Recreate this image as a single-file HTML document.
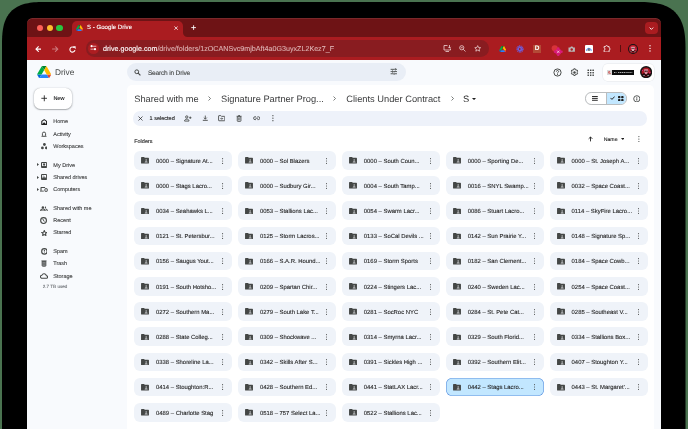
<!DOCTYPE html>
<html><head><meta charset="utf-8">
<style>
*{box-sizing:border-box;margin:0;padding:0}
html,body{width:688px;height:429px;overflow:hidden}
body{background:#4a7350;font-family:"Liberation Sans",sans-serif;position:relative;text-rendering:geometricPrecision}
.abs{position:absolute}
.t{position:absolute;line-height:1;white-space:nowrap}

#win{will-change:transform;position:absolute;left:27px;top:18px;width:634px;height:430px}
#tabs{position:absolute;left:0;top:0;width:634px;height:19.2px;background:#6e1315;border-radius:5.5px 5.5px 0 0;box-shadow:inset 0 0.8px 0 rgba(255,255,255,0.12)}
#toolbar{position:absolute;left:0;top:20px;width:634px;height:21.8px;background:#aa1c20}
.tl{position:absolute;top:6.8px;width:6.6px;height:6.6px;border-radius:50%}
#tab{position:absolute;left:45px;top:3px;width:111px;height:17.2px;background:#aa1c20;border-radius:5px 5px 0 0}
#url{position:absolute;left:58.5px;top:2.4px;width:403.7px;height:16.5px;background:#891c20;border-radius:8.25px}
.tile{position:absolute;width:98px;height:18.6px;background:#eff3f9;border-radius:6px}
.tile .fi{position:absolute;left:7.2px;top:6.2px;width:8px;height:6.6px}
.tile .tx{position:absolute;left:22px;top:1.5px;line-height:18.6px;font-size:5.9px;color:#1f1f1f;white-space:nowrap;letter-spacing:0;-webkit-text-stroke:0.1px #1f1f1f}
.tile .kb{position:absolute;left:88.4px;top:6.6px;width:1.2px;height:6px}
.tile.sel{background:#c2e7ff;box-shadow:inset 0 0 0 0.6px #5f94e0}
.nav{position:absolute;left:26.3px;font-size:5.5px;color:#38393a;-webkit-text-stroke:0.1px #38393a}
.ic{position:absolute}
</style></head>
<body>
<svg id="frame" class="abs" style="left:0;top:0" width="688" height="429" viewBox="0 0 688 429"><path d="M2.0,440.0 L2.00,47.00 L2.02,41.80 L2.09,38.75 L2.21,36.20 L2.37,33.94 L2.58,31.86 L2.83,29.94 L3.13,28.13 L3.48,26.43 L3.87,24.82 L4.31,23.28 L4.80,21.82 L5.33,20.42 L5.91,19.08 L6.54,17.81 L7.21,16.59 L7.93,15.42 L8.70,14.31 L9.51,13.25 L10.37,12.24 L11.28,11.28 L12.24,10.37 L13.25,9.51 L14.31,8.70 L15.42,7.93 L16.59,7.21 L17.81,6.54 L19.08,5.91 L20.42,5.33 L21.82,4.80 L23.28,4.31 L24.82,3.87 L26.43,3.48 L28.13,3.13 L29.94,2.83 L31.86,2.58 L33.94,2.37 L36.20,2.21 L38.75,2.09 L41.80,2.02 L47.00,2.00 L635.50,2.00 L641.28,2.03 L644.66,2.10 L647.50,2.23 L650.02,2.41 L652.32,2.64 L654.46,2.93 L656.46,3.26 L658.35,3.65 L660.15,4.08 L661.86,4.57 L663.48,5.11 L665.03,5.70 L666.52,6.35 L667.94,7.04 L669.29,7.79 L670.58,8.59 L671.82,9.44 L673.00,10.35 L674.12,11.30 L675.19,12.31 L676.20,13.38 L677.15,14.50 L678.06,15.68 L678.91,16.92 L679.71,18.21 L680.46,19.56 L681.15,20.98 L681.80,22.47 L682.39,24.02 L682.93,25.64 L683.42,27.35 L683.85,29.15 L684.24,31.04 L684.57,33.04 L684.86,35.18 L685.09,37.48 L685.27,40.00 L685.40,42.84 L685.47,46.22 L685.50,52.00 L685.5,440.0 Z" fill="#000"/></svg>
<div id="win">
  <div class="abs" style="left:0;top:30px;width:634px;height:400px;background:#f8fafd"></div>
  <div id="tabs">
    <div class="tl" style="left:9.7px;background:#fe5f57"></div>
    <div class="tl" style="left:19.6px;background:#febc2e"></div>
    <div class="tl" style="left:29.2px;background:#28c840"></div>
    <div class="abs" style="left:40px;top:15px;width:5px;height:5px;background:#aa1c20"></div>
    <div class="abs" style="left:40px;top:10px;width:5px;height:9.2px;background:#6e1315;border-radius:0 0 4.5px 0"></div>
    <div class="abs" style="left:156px;top:15px;width:5px;height:5px;background:#aa1c20"></div>
    <div class="abs" style="left:156px;top:10px;width:5px;height:9.2px;background:#6e1315;border-radius:0 0 0 4.5px"></div>
    <div id="tab">
      <svg class="abs" style="left:3.8px;top:3.8px" width="7.1" height="6.4" viewBox="0 0 87.3 78"><path d="m6.6 66.85 3.850 6.65c.8 1.4 1.95 2.5 3.3 3.3l13.75-23.8h-27.5c0 1.55.4 3.1 1.2 4.5z" fill="#0066da"/><path d="m43.65 25-13.75-23.8c-1.35.8-2.5 1.9-3.3 3.3l-25.4 44a9.06 9.06 0 0 0 -1.2 4.5h27.5z" fill="#00ac47"/><path d="m73.55 76.8c1.35-.8 2.5-1.9 3.3-3.3l1.6-2.75 7.65-13.250c.8-1.4 1.2-2.95 1.2-4.5h-27.502l5.852 11.5z" fill="#ea4335"/><path d="m43.65 25 13.75-23.8c-1.35-.8-2.9-1.2-4.5-1.2h-18.5c-1.6 0-3.15.45-4.5 1.2z" fill="#00832d"/><path d="m59.8 53h-32.3l-13.75 23.8c1.35.8 2.9 1.2 4.5 1.2h50.8c1.6 0 3.15-.45 4.5-1.2z" fill="#2684fc"/><path d="m73.4 26.5-12.7-22c-.8-1.4-1.95-2.5-3.3-3.3l-13.75 23.8 16.15 28h27.45c0-1.55-.4-3.1-1.2-4.5z" fill="#ffba00"/></svg>
      <div class="abs" style="left:15px;top:-0.6px;line-height:16px;font-size:6.1px;color:#fff;-webkit-text-stroke:0.1px #fff">S - Google Drive</div>
      <svg class="abs" style="left:101.9px;top:4.7px" width="4.2" height="4.2" viewBox="0 0 10 10"><path d="M1 1l8 8M9 1L1 9" stroke="#fff" stroke-width="1.8"/></svg>
    </div>
    <svg class="abs" style="left:163.8px;top:7.2px" width="5.2" height="5.2" viewBox="0 0 10 10"><path d="M5 0.5v9M0.5 5h9" stroke="#fff" stroke-width="1.7"/></svg>
    <div class="abs" style="left:618px;top:3.6px;width:12.7px;height:12.7px;border-radius:4px;background:#aa1c20"><svg class="abs" style="left:4px;top:5px" width="4.8" height="3" viewBox="0 0 8 5"><path d="M1 1l3 3 3-3" fill="none" stroke="#fff" stroke-width="1.5"/></svg></div>
  </div>
  <div class="abs" style="left:0;top:19.2px;width:634px;height:1px;background:#aa1c20"></div>
  <div id="toolbar">
    <svg class="abs" style="left:7.6px;top:7.9px" width="6.8" height="6.2" viewBox="0 0 12 11"><path d="M11.2 5.5H1.8M6 1.3L1.6 5.5 6 9.7" fill="none" stroke="#fff" stroke-width="1.9" stroke-linejoin="round" stroke-linecap="round"/></svg>
    <svg class="abs" style="left:24.9px;top:7.9px" width="6.8" height="6.2" viewBox="0 0 12 11"><path d="M0.8 5.5h9.4M6 1.3l4.4 4.2L6 9.7" fill="none" stroke="#fff" stroke-opacity="0.42" stroke-width="1.8" stroke-linejoin="round" stroke-linecap="round"/></svg>
    <svg class="abs" style="left:42.1px;top:7.6px" width="7" height="7" viewBox="0 0 12 12"><path d="M10.2 7.2A4.4 4.4 0 1 1 8.6 2.6" fill="none" stroke="#fff" stroke-width="1.9"/><path d="M6.6 0.6h4.8v4.8z" fill="#fff"/></svg>
    <div id="url">
      <div class="abs" style="left:2.55px;top:2.55px;width:10.7px;height:10.7px;border-radius:50%;background:#ad1d21"></div>
      <svg class="abs" style="left:4.6px;top:5.0px" width="6.8" height="5.4" viewBox="0 0 14 11"><path d="M5.5 2.5H13M1 8.5h7" stroke="#fff" stroke-opacity="0.9" stroke-width="1.5"/><circle cx="3.3" cy="2.5" r="2.3" fill="#fff"/><circle cx="10.3" cy="8.5" r="2.3" fill="#fff"/></svg>
      <svg class="abs" style="left:357.6px;top:4.3px" width="8.5" height="7" viewBox="0 0 17 14"><path d="M9 1H2v9h13V7" fill="none" stroke="#f3dede" stroke-width="1.5"/><path d="M5 13h7" stroke="#f3dede" stroke-width="1.5"/><path d="M13 0v6M10.5 3.8L13 6.3l2.5-2.5" fill="none" stroke="#f3dede" stroke-width="1.5"/></svg>
      <svg class="abs" style="left:373.6px;top:4.4px" width="7" height="7" viewBox="0 0 14 14"><circle cx="5.5" cy="5.5" r="4.2" fill="none" stroke="#f3dede" stroke-width="1.5"/><path d="M8.5 8.5l4.5 4.5M3.5 5.5h4" stroke="#f3dede" stroke-width="1.5"/></svg>
      <svg class="abs" style="left:388.9px;top:4.3px" width="7.4" height="7.2" viewBox="0 0 14 14"><path d="M7 1.2l1.7 3.7 4 .4-3 2.7.9 4L7 10l-3.6 2 .9-4-3-2.7 4-.4z" fill="none" stroke="#f3dede" stroke-width="1.4" stroke-linejoin="round"/></svg>
      <div class="abs" style="left:17.5px;top:0.3px;line-height:16.2px;font-size:7.15px;color:#fff;white-space:nowrap;-webkit-text-stroke:0.12px #fff">drive.google.com<span style="color:#dcb0b0;-webkit-text-stroke:0.12px #dcb0b0">/drive/folders/1zOCANSvc9mjbAft4a0G3uyxZL2Kez7_F</span></div>
    </div>
    <svg class="abs" style="left:471.6px;top:7.6px" width="7.6" height="6.4" viewBox="0 0 87.3 78"><path d="m6.6 66.85 3.85 6.65c.8 1.4 1.95 2.5 3.3 3.3l13.75-23.8h-27.5c0 1.55.4 3.1 1.2 4.5z" fill="#0066da"/><path d="m43.65 25-13.75-23.8c-1.35.8-2.5 1.9-3.3 3.3l-25.4 44a9.06 9.06 0 0 0 -1.2 4.5h27.5z" fill="#00ac47"/><path d="m73.55 76.8c1.35-.8 2.5-1.9 3.3-3.3l1.6-2.75 7.65-13.25c.8-1.4 1.2-2.95 1.2-4.5h-27.502l5.852 11.5z" fill="#ea4335"/><path d="m43.65 25 13.75-23.8c-1.35-.8-2.9-1.2-4.5-1.2h-18.5c-1.6 0-3.15.45-4.5 1.2z" fill="#00832d"/><path d="m59.8 53h-32.3l-13.75 23.8c1.35.8 2.9 1.2 4.5 1.2h50.8c1.6 0 3.15-.45 4.5-1.2z" fill="#2684fc"/><path d="m73.4 26.5-12.7-22c-.8-1.4-1.95-2.5-3.3-3.3l-13.75 23.8 16.15 28h27.45c0-1.55-.4-3.1-1.2-4.5z" fill="#ffba00"/></svg>
    <svg class="abs" style="left:489px;top:6.9px" width="8" height="8" viewBox="0 0 16 16"><circle cx="8" cy="8" r="5.8" fill="none" stroke="#6d5ee0" stroke-width="3" stroke-dasharray="2 1.1"/><circle cx="8" cy="8" r="4.5" fill="#6d5ee0"/><path d="M6 5.5l4.5 2.5L6 10.5z" fill="#aa1c20"/></svg>
    <div class="abs" style="left:506.2px;top:7px;width:7.8px;height:7.8px;background:#b34a36"><div class="t" style="left:1.6px;top:1.1px;font-size:6.5px;color:#fff;font-weight:bold">D</div></div>
    <svg class="abs" style="left:523.5px;top:6.2px" width="12" height="12" viewBox="0 0 24 24"><circle cx="7.5" cy="8.5" r="6.2" fill="#d8333a"/><g fill="#d81b78"><circle cx="14.5" cy="15.5" r="6.2"/><circle cx="14.5" cy="9" r="2.6"/><circle cx="21" cy="15.5" r="2.6"/><circle cx="14.5" cy="22" r="2.4"/><circle cx="8" cy="15.5" r="2.6"/></g><path d="M12.3 13.3l4.4 4.4M16.7 13.3l-4.4 4.4" stroke="#f4d8e4" stroke-width="1.5"/></svg>
    <svg class="abs" style="left:541.2px;top:7.9px" width="7.4" height="6" viewBox="0 0 15 12"><path d="M1 3h3.5l1.5-2h3l1.5 2H14v8.5H1z" fill="#b9b9b9"/><circle cx="7.5" cy="7" r="2.4" fill="#aa1c20"/></svg>
    <div class="abs" style="left:558.2px;top:6.9px;width:8.2px;height:7.7px;background:#fff;border-radius:1px"><svg class="abs" style="left:1.2px;top:1.2px" width="5.8" height="5.3" viewBox="0 0 12 11"><path d="M1 10a5 5 0 0 1 10 0" fill="none" stroke="#4285f4" stroke-width="2"/><path d="M6 3l3 7H3z" fill="#5f6368"/></svg></div>
    <svg class="abs" style="left:576px;top:6.9px" width="8.2" height="7.5" viewBox="0 0 16 15"><path d="M2 3h3a2 2 0 0 1 4 0h3v3a2 2 0 0 1 0 4v4H2v-4a2 2 0 0 0 0-4z" fill="none" stroke="#fff" stroke-width="1.5" stroke-linejoin="round"/></svg>
    <div class="abs" style="left:592.6px;top:7.2px;width:0.8px;height:6.7px;background:#5a0e0e"></div>
    <svg class="abs" style="left:600.9px;top:6px" width="10" height="10" viewBox="0 0 24 24"><circle cx="12" cy="12" r="12" fill="#151515"/><circle cx="12" cy="12" r="9.6" fill="#c01a28"/><path d="M8 6.5h8l1 5-2 2.5v3h-6v-3l-2-2.5z" fill="#e6a8b4"/><circle cx="9.8" cy="10.5" r="1.5" fill="#3a0a10"/><circle cx="14.2" cy="10.5" r="1.5" fill="#3a0a10"/><path d="M5 17l3-2 4 3 4-3 3 2-3 3h-8z" fill="#2a0a0e"/><path d="M6 18.5h3M15 18.5h3" stroke="#f0d0d8" stroke-width="1.5"/><circle cx="19" cy="13" r="1.3" fill="#e0309a"/><circle cx="5.5" cy="9" r="1" fill="#e0309a"/></svg>
    <svg class="abs" style="left:622px;top:7.2px" width="2" height="6.8" viewBox="0 0 2 10"><circle cx="1" cy="1.1" r="1" fill="#fff"/><circle cx="1" cy="5" r="1" fill="#fff"/><circle cx="1" cy="8.9" r="1" fill="#fff"/></svg>
  </div>

  <!-- Drive header -->
  <svg class="abs" style="left:9.9px;top:48px" width="14.3" height="12.4" viewBox="0 0 87.3 78"><path d="m6.6 66.85 3.85 6.65c.8 1.4 1.95 2.5 3.3 3.3l13.75-23.8h-27.5c0 1.55.4 3.1 1.2 4.5z" fill="#0066da"/><path d="m43.65 25-13.75-23.8c-1.35.8-2.5 1.9-3.3 3.3l-25.4 44a9.06 9.06 0 0 0 -1.2 4.5h27.5z" fill="#00ac47"/><path d="m73.55 76.8c1.35-.8 2.5-1.9 3.3-3.3l1.6-2.75 7.65-13.25c.8-1.4 1.2-2.95 1.2-4.5h-27.502l5.852 11.5z" fill="#ea4335"/><path d="m43.65 25 13.75-23.8c-1.35-.8-2.9-1.2-4.5-1.2h-18.5c-1.6 0-3.15.45-4.5 1.2z" fill="#00832d"/><path d="m59.8 53h-32.3l-13.75 23.8c1.35.8 2.9 1.2 4.5 1.2h50.8c1.6 0 3.15-.45 4.5-1.2z" fill="#2684fc"/><path d="m73.4 26.5-12.7-22c-.8-1.4-1.95-2.5-3.3-3.3l-13.75 23.8 16.15 28h27.45c0-1.55-.4-3.1-1.2-4.5z" fill="#ffba00"/></svg>
  <div class="t" style="left:28px;top:50.2px;font-size:8.3px;color:#444746">Drive</div>
  <div class="abs" style="left:6.7px;top:69.9px;width:38.5px;height:21.2px;background:#fff;border-radius:6.5px;box-shadow:0 0.4px 1px rgba(60,64,67,.3),0 0.4px 1.5px 0.4px rgba(60,64,67,.15)"></div>
  <svg class="abs" style="left:13.7px;top:77.4px" width="6.6" height="6.6" viewBox="0 0 10 10"><path d="M5 0.5v9M0.5 5h9" stroke="#1f1f1f" stroke-width="1.3"/></svg>
  <div class="t" style="left:26.4px;top:79.2px;font-size:5.6px;font-weight:bold;letter-spacing:-0.15px;color:#333435">New</div>

  <!-- search -->
  <div class="abs" style="left:100px;top:45.3px;width:278.5px;height:18px;background:#e9eef6;border-radius:9px"></div>
  <svg class="abs" style="left:106.5px;top:50.5px" width="7" height="7" viewBox="0 0 24 24"><circle cx="9.5" cy="9.5" r="6.5" fill="none" stroke="#444746" stroke-width="3.4"/><path d="M14.2 14.2l7.8 7.8" stroke="#444746" stroke-width="3.8"/></svg>
  <div class="t" style="left:120.9px;top:53.1px;font-size:6.6px;color:#444746;letter-spacing:-0.2px;-webkit-text-stroke:0.1px #444746">Search in Drive</div>
  <svg class="abs" style="left:363.2px;top:50.4px" width="7.6" height="7.1" viewBox="0 0 24 22"><path d="M2 4h13M19 4h3M2 11h4M10 11h12M2 18h9M15 18h7" stroke="#444746" stroke-width="2.8"/><path d="M17 0.5v7M8 7.5v7M13 14.5v7" stroke="#444746" stroke-width="2.8"/></svg>

  <!-- top right -->
  <svg class="abs" style="left:525.7px;top:49.6px" width="9" height="9" viewBox="0 0 24 24"><circle cx="12" cy="12" r="9.6" fill="none" stroke="#444746" stroke-width="2.6"/><path d="M9 9.6a3 3 0 1 1 4.4 2.6c-.9.5-1.4 1-1.4 2.2v.4" fill="none" stroke="#444746" stroke-width="2.5"/><circle cx="12" cy="17.6" r="1.5" fill="#444746"/></svg>
  <svg class="abs" style="left:542.9px;top:49.6px" width="9" height="9" viewBox="0 0 24 24"><path d="M10.1 2.2h3.8l.5 2.6c.7.3 1.3.6 1.9 1.1l2.5-.9 1.9 3.3-2 1.7c.1.7.1 1.4 0 2.1l2 1.7-1.9 3.3-2.5-.9c-.6.5-1.2.8-1.9 1.1l-.5 2.6h-3.8l-.5-2.6c-.7-.3-1.3-.6-1.9-1.1l-2.5.9-1.9-3.3 2-1.7c-.1-.7-.1-1.4 0-2.1l-2-1.7 1.9-3.3 2.5.9c.6-.5 1.2-.8 1.9-1.1z" fill="none" stroke="#444746" stroke-width="2.6" stroke-linejoin="round"/><circle cx="12" cy="12" r="3.2" fill="#444746"/></svg>
  <svg class="abs" style="left:559.9px;top:50.9px" width="7.4" height="7.4" viewBox="0 0 24 24"><g fill="#444746"><rect x="1.5" y="1.5" width="5" height="5" rx="1.2"/><rect x="9.5" y="1.5" width="5" height="5" rx="1.2"/><rect x="17.5" y="1.5" width="5" height="5" rx="1.2"/><rect x="1.5" y="9.5" width="5" height="5" rx="1.2"/><rect x="9.5" y="9.5" width="5" height="5" rx="1.2"/><rect x="17.5" y="9.5" width="5" height="5" rx="1.2"/><rect x="1.5" y="17.5" width="5" height="5" rx="1.2"/><rect x="9.5" y="17.5" width="5" height="5" rx="1.2"/><rect x="17.5" y="17.5" width="5" height="5" rx="1.2"/></g></svg>
  <div class="abs" style="left:575.9px;top:45.5px;width:51.3px;height:17.7px;background:#fff;border-radius:4.5px;box-shadow:0 0 0 0.5px #e3e6ea"></div>
  <div class="abs" style="left:580.4px;top:52.1px;width:4.4px;height:4.8px;background:#d9d9d9"><svg class="abs" style="left:0.8px;top:0.5px" width="2.6" height="3.8" viewBox="0 0 6 9"><path d="M5 1.5H2.2a1.5 1.5 0 0 0 0 3h1.6a1.5 1.5 0 0 1 0 3H1" fill="none" stroke="#d03a3a" stroke-width="1.8"/></svg></div>
  <div class="abs" style="left:584.8px;top:52px;width:22.3px;height:5px;background:#0d0d0d"><svg class="abs" style="left:2.4px;top:1.6px" width="18.4" height="1.8" viewBox="0 0 194 18"><rect x="1" y="1" width="13" height="16" fill="none" stroke="#e0e0e0" stroke-width="3.5"/><rect x="27" y="0" width="4" height="18" fill="#e0e0e0"/><rect x="45" y="1" width="13" height="16" fill="none" stroke="#e0e0e0" stroke-width="3.5"/><rect x="67" y="1" width="13" height="16" fill="none" stroke="#e0e0e0" stroke-width="3.5"/><rect x="89" y="1" width="13" height="16" fill="none" stroke="#e0e0e0" stroke-width="3.5"/><rect x="111" y="1" width="13" height="16" fill="none" stroke="#e0e0e0" stroke-width="3.5"/><rect x="133" y="1" width="13" height="16" fill="none" stroke="#e0e0e0" stroke-width="3.5"/><rect x="155" y="1" width="13" height="16" fill="none" stroke="#e0e0e0" stroke-width="3.5"/><rect x="177" y="1" width="13" height="16" fill="none" stroke="#e0e0e0" stroke-width="3.5"/></svg></div>
  <svg class="abs" style="left:613px;top:48.3px" width="12.2" height="12.2" viewBox="0 0 24 24"><circle cx="12" cy="12" r="12" fill="#141414"/><circle cx="12" cy="12" r="9" fill="#a81622"/><path d="M8.5 6.5h7l1 4.5-2 2.5v2.5h-5v-2.5l-2-2.5z" fill="#d890a0"/><circle cx="10.2" cy="10.3" r="1.5" fill="#2a060a"/><circle cx="13.8" cy="10.3" r="1.5" fill="#2a060a"/><path d="M4 16l4-2 4 3 4-3 4 2-3 4h-10z" fill="#1a0608"/><path d="M6.5 18.5h3M14.5 18.5h3" stroke="#f0d0d8" stroke-width="1.4"/><circle cx="19.5" cy="13" r="1.3" fill="#e0309a"/><circle cx="5" cy="9" r="1" fill="#e0309a"/></svg>

  <!-- sidebar -->
  <div class="t nav" style="top:102.39px">Home</div>
<svg class="ic" style="left:13.80px;top:100.70px" width="6.4" height="6.0" viewBox="0 0 24 22" ><path d="M3 20V9.5a2 2 0 0 1 .8-1.6L12 2l8.2 5.9a2 2 0 0 1 .8 1.6V20z" fill="none" stroke="#1f1f1f" stroke-width="4.00" stroke-linejoin="round"/><path d="M7.5 20v-2.5a4.5 4.5 0 0 1 9 0V20z" fill="#1f1f1f"/></svg>
<div class="t nav" style="top:114.59px">Activity</div>
<svg class="ic" style="left:14.00px;top:112.70px" width="6.0" height="6.6" viewBox="0 0 22 25" ><path d="M5 17.5V10a6 6 0 0 1 12 0v7.5l2.5 2.5h-17z" fill="none" stroke="#444746" stroke-width="3.6" stroke-linejoin="round"/><path d="M8.5 23.5h5" stroke="#444746" stroke-width="3"/></svg>
<div class="t nav" style="top:127.19px">Workspaces</div>
<svg class="ic" style="left:13.60px;top:125.20px" width="6.8" height="6.4" viewBox="0 0 24 22" ><circle cx="12" cy="5" r="4.9" fill="#444746"/><circle cx="5" cy="17" r="4.9" fill="#444746"/><circle cx="19" cy="17" r="4.9" fill="#444746"/></svg>
<div class="t nav" style="top:145.89px">My Drive</div>
<svg class="ic" style="left:13.90px;top:143.80px" width="6.2" height="6.0" viewBox="0 0 24 23" ><rect x="2" y="2" width="20" height="19" rx="2.5" fill="none" stroke="#444746" stroke-width="4.25"/><path d="M8 5.5h8v7H8z" fill="#444746"/><path d="M12 11.5l-3.5 3h7z" fill="#444746"/><path d="M4 15.5h16v5H4z" fill="#444746"/></svg>
<svg class="ic" style="left:9.50px;top:145.30px" width="2" height="3" viewBox="0 0 2 3"><path d="M0 0l2 1.5L0 3z" fill="#444746"/></svg>
<div class="t nav" style="top:158.09px">Shared drives</div>
<svg class="ic" style="left:13.90px;top:156.00px" width="6.2" height="6.0" viewBox="0 0 24 23" ><rect x="2" y="2" width="20" height="19" rx="2.5" fill="none" stroke="#444746" stroke-width="4.25"/><path d="M6 13.5h12M7 10.5l3-3 3 3" fill="none" stroke="#444746" stroke-width="3.00"/><path d="M4 15.5h16v5H4z" fill="#444746"/></svg>
<svg class="ic" style="left:9.50px;top:157.50px" width="2" height="3" viewBox="0 0 2 3"><path d="M0 0l2 1.5L0 3z" fill="#444746"/></svg>
<div class="t nav" style="top:170.39px">Computers</div>
<svg class="ic" style="left:13.20px;top:168.90px" width="7.6" height="4.8" viewBox="0 0 30 19" ><path d="M4 15V3.5A1.5 1.5 0 0 1 5.5 2H20" fill="none" stroke="#444746" stroke-width="4.25"/><path d="M0 14.5h15v3.5H0z" fill="#444746"/><rect x="19.5" y="6.5" width="9" height="11" rx="1.5" fill="none" stroke="#444746" stroke-width="3.75"/></svg>
<svg class="ic" style="left:9.50px;top:169.80px" width="2" height="3" viewBox="0 0 2 3"><path d="M0 0l2 1.5L0 3z" fill="#444746"/></svg>
<div class="t nav" style="top:188.69px">Shared with me</div>
<svg class="ic" style="left:13.05px;top:187.70px" width="7.9" height="5.2" viewBox="0 0 30 20" ><circle cx="11" cy="5.5" r="4.8" fill="#444746"/><path d="M2.5 19v-2.5c0-3.5 4-5.3 8.5-5.3s8.5 1.8 8.5 5.3V19z" fill="none" stroke="#444746" stroke-width="4.00"/><path d="M19 0.8a4.8 4.8 0 0 1 0 9.5z" fill="#444746"/><path d="M22 11.5c3 .6 5.5 2.2 5.5 5V19" fill="none" stroke="#444746" stroke-width="4.00"/></svg>
<div class="t nav" style="top:201.09px">Recent</div>
<svg class="ic" style="left:13.45px;top:198.85px" width="7.1" height="7.1" viewBox="0 0 24 24" ><circle cx="12" cy="12" r="9.8" fill="none" stroke="#444746" stroke-width="3.75"/><path d="M9 6l5.5 9.5" fill="none" stroke="#444746" stroke-width="3.25"/></svg>
<div class="t nav" style="top:213.19px">Starred</div>
<svg class="ic" style="left:13.70px;top:211.70px" width="6.6" height="6.0" viewBox="0 0 24 22" ><path d="M12 2l2.9 6.3 6.9.7-5.2 4.6 1.5 6.8L12 16.9l-6.1 3.5 1.5-6.8L2.2 9l6.9-.7z" fill="none" stroke="#444746" stroke-width="3.75" stroke-linejoin="round"/></svg>
<div class="t nav" style="top:232.19px">Spam</div>
<svg class="ic" style="left:13.60px;top:230.00px" width="6.8" height="6.8" viewBox="0 0 24 24" ><circle cx="12" cy="12" r="9.6" fill="none" stroke="#444746" stroke-width="4.00"/><path d="M12 6.5v6" stroke="#444746" stroke-width="3.75"/><circle cx="12" cy="16.5" r="1.6" fill="#444746"/></svg>
<div class="t nav" style="top:244.49px">Trash</div>
<svg class="ic" style="left:14.00px;top:241.90px" width="6.0" height="6.8" viewBox="0 0 22 25" ><path d="M1.5 3.5h19" stroke="#444746" stroke-width="3.4"/><path d="M4 5.5h14v15a2.5 2.5 0 0 1-2.5 2.5h-9A2.5 2.5 0 0 1 4 20.5z" fill="#8a8c8e" stroke="#444746" stroke-width="3"/><path d="M8.5 9.5v9M13.5 9.5v9" stroke="#444746" stroke-width="1.6"/></svg>
<div class="t nav" style="top:256.89px">Storage</div>
<svg class="ic" style="left:12.85px;top:254.95px" width="8.3" height="5.7" viewBox="0 0 30 20" ><path d="M7.5 18.5a5.5 5.5 0 0 1-.6-11A8.5 8.5 0 0 1 23 9.5a4.5 4.5 0 0 1 .5 9z" fill="none" stroke="#444746" stroke-width="3.75"/></svg>
<div class="t" style="left:15.7px;top:266.5px;font-size:4.6px;color:#5f6368;-webkit-text-stroke:0.06px #5f6368">2.7 TB used</div>

  <!-- card -->
  <div class="abs" style="left:99.6px;top:67px;width:527.6px;height:400px;background:#fff;border-radius:5px"></div>
  <div class="t" style="left:107.2px;top:76.9px;font-size:9.3px;color:#3a3b3c">Shared with me</div>
  <div class="t" style="left:194px;top:76.9px;font-size:9.3px;color:#3a3b3c">Signature Partner Prog...</div>
  <div class="t" style="left:319.3px;top:76.9px;font-size:9.3px;color:#3a3b3c">Clients Under Contract</div>
  <div class="t" style="left:436px;top:76.9px;font-size:9.3px;color:#1f1f1f">S</div>
  <svg class="ic" style="left:181.20px;top:78.10px" width="3" height="5" viewBox="0 0 6 10" ><path d="M1 1l4 4-4 4" fill="none" stroke="#444746" stroke-width="1.4"/></svg>
<svg class="ic" style="left:306.40px;top:78.10px" width="3" height="5" viewBox="0 0 6 10" ><path d="M1 1l4 4-4 4" fill="none" stroke="#444746" stroke-width="1.4"/></svg>
<svg class="ic" style="left:423.50px;top:78.10px" width="3" height="5" viewBox="0 0 6 10" ><path d="M1 1l4 4-4 4" fill="none" stroke="#444746" stroke-width="1.4"/></svg>
<svg class="ic" style="left:444.70px;top:79.70px" width="4" height="2.2" viewBox="0 0 8 4" ><path d="M0 0h8L4 4z" fill="#1f1f1f"/></svg>

  <!-- view toggle -->
  <div class="abs" style="left:558px;top:74.3px;width:42px;height:12.3px;border-radius:6.15px;border:0.7px solid #b9bcbe;overflow:hidden;background:#fff">
    <div class="abs" style="left:20.3px;top:0;width:22px;height:12px;background:#c2e7ff;border-left:0.7px solid #b9bcbe"></div>
  </div>
  <svg class="ic" style="left:565.10px;top:78.20px" width="5.8" height="4.8" viewBox="0 0 12 10" ><path d="M0 1.1h12M0 5h12M0 8.9h12" stroke="#1f1f1f" stroke-width="2"/></svg>
<svg class="ic" style="left:583.20px;top:78.40px" width="5.2" height="3.8" viewBox="0 0 12 9" ><path d="M1 4.5l3.5 3.5L11 1.2" fill="none" stroke="#1f1f1f" stroke-width="2.3"/></svg>
<svg class="ic" style="left:591.10px;top:77.90px" width="5.6" height="5.2" viewBox="0 0 11 10" ><g fill="#1f1f1f"><rect x="0" y="0" width="4.8" height="4.4" rx="1.6"/><rect x="6.2" y="0" width="4.8" height="4.4" rx="1.6"/><rect x="0" y="5.6" width="4.8" height="4.4" rx="1.6"/><rect x="6.2" y="5.6" width="4.8" height="4.4" rx="1.6"/></g></svg>
<svg class="ic" style="left:605.70px;top:76.70px" width="7.6" height="7.6" viewBox="0 0 24 24" ><circle cx="12" cy="12" r="9.8" fill="none" stroke="#444746" stroke-width="2.8"/><path d="M12 10.5v7" stroke="#444746" stroke-width="3"/><circle cx="12" cy="7" r="1.7" fill="#444746"/></svg>

  <!-- selection bar -->
  <div class="abs" style="left:105.6px;top:93.4px;width:514.2px;height:14.3px;background:#eef2fa;border-radius:7.2px"></div>
  <div class="t" style="left:122.5px;top:99px;font-size:5.55px;color:#1f1f1f;-webkit-text-stroke:0.12px #1f1f1f">1 selected</div>
  <svg class="ic" style="left:110.80px;top:97.90px" width="5" height="5" viewBox="0 0 10 10" ><path d="M1 1l8 8M9 1L1 9" stroke="#1f1f1f" stroke-width="1.4"/></svg>
<svg class="ic" style="left:157.00px;top:97.20px" width="7.6" height="6.6" viewBox="0 0 26 22" ><circle cx="9.5" cy="6.5" r="4" fill="none" stroke="#444746" stroke-width="3"/><path d="M2 20.5v-1.5c0-3 3.5-5 7.5-5s7.5 2 7.5 5v1.5z" fill="none" stroke="#444746" stroke-width="3" stroke-linejoin="round"/><path d="M21.5 5v8M17.5 9h8" stroke="#444746" stroke-width="2.8"/></svg>
<svg class="ic" style="left:174.80px;top:97.30px" width="6.6" height="6.6" viewBox="0 0 24 24" ><path d="M12 2v13M6.5 9.5l5.5 5.5 5.5-5.5" fill="none" stroke="#444746" stroke-width="3"/><path d="M3 19.5h18" stroke="#444746" stroke-width="3.2"/></svg>
<svg class="ic" style="left:190.90px;top:97.30px" width="7.4" height="6.4" viewBox="0 0 26 22" ><path d="M2 3.5a1.5 1.5 0 0 1 1.5-1.5h6.5l2.5 2.5h10a1.5 1.5 0 0 1 1.5 1.5v12.5a1.5 1.5 0 0 1-1.5 1.5h-19a1.5 1.5 0 0 1-1.5-1.5z" fill="none" stroke="#444746" stroke-width="3"/><path d="M8 12.5h8M13 9l3.5 3.5L13 16" fill="none" stroke="#444746" stroke-width="2.6"/></svg>
<svg class="ic" style="left:209.00px;top:97.10px" width="6.2" height="6.8" viewBox="0 0 22 24" ><path d="M2 4.5h18M8 1.8h6" stroke="#444746" stroke-width="3"/><path d="M4.5 6.5h13v14a2 2 0 0 1-2 2h-9a2 2 0 0 1-2-2z" fill="none" stroke="#444746" stroke-width="3"/><path d="M9 10v9M13 10v9" stroke="#444746" stroke-width="2.2"/></svg>
<svg class="ic" style="left:225.70px;top:98.30px" width="7.4" height="4.4" viewBox="0 0 26 14" ><path d="M10.5 2H7a5 5 0 0 0 0 10h3.5M15.5 2H19a5 5 0 0 1 0 10h-3.5M8.5 7h9" fill="none" stroke="#444746" stroke-width="3"/></svg>
<svg class="ic" style="left:245.10px;top:97.30px" width="1.8" height="6.4" viewBox="0 0 2 10" ><circle cx="1" cy="1.1" r="1" fill="#444746"/><circle cx="1" cy="5" r="1" fill="#444746"/><circle cx="1" cy="8.9" r="1" fill="#444746"/></svg>

  <div class="t" style="left:107.2px;top:122.2px;font-size:5.5px;color:#1f1f1f;-webkit-text-stroke:0.12px #1f1f1f">Folders</div>
  <div class="t" style="left:576.7px;top:119.8px;font-size:5.2px;color:#1f1f1f;-webkit-text-stroke:0.12px #1f1f1f">Name</div>
  <svg class="ic" style="left:560.50px;top:118.30px" width="5" height="5.4" viewBox="0 0 10 11" ><path d="M5 11V2M1.2 5.8L5 2l3.8 3.8" fill="none" stroke="#1f1f1f" stroke-width="1.8"/></svg>
<svg class="ic" style="left:593.70px;top:120.40px" width="3.6" height="2" viewBox="0 0 8 4" ><path d="M0 0h8L4 4z" fill="#1f1f1f"/></svg>
<svg class="ic" style="left:611.10px;top:118.10px" width="1.8" height="6.2" viewBox="0 0 2 10" ><circle cx="1" cy="1" r="0.95" fill="#444746"/><circle cx="1" cy="5" r="0.95" fill="#444746"/><circle cx="1" cy="9" r="0.95" fill="#444746"/></svg>

<div class="tile" style="left:107.00px;top:133.00px"><svg class="fi" viewBox="0 0 24 20"><path d="M2 0h7l2.5 2.5H22a2 2 0 0 1 2 2V18a2 2 0 0 1-2 2H2a2 2 0 0 1-2-2V2a2 2 0 0 1 2-2z" fill="#444746"/><circle cx="15.5" cy="9" r="2.4" fill="#c8cacc"/><path d="M11 16.5c0-2.6 2.2-3.9 4.5-3.9s4.5 1.3 4.5 3.9z" fill="#c8cacc"/></svg><div class="tx">0000 – Signature At...</div><svg class="kb" viewBox="0 0 2 10"><circle cx="1" cy="1" r="0.9" fill="#444746"/><circle cx="1" cy="5" r="0.9" fill="#444746"/><circle cx="1" cy="9" r="0.9" fill="#444746"/></svg></div>
<div class="tile" style="left:210.90px;top:133.00px"><svg class="fi" viewBox="0 0 24 20"><path d="M2 0h7l2.5 2.5H22a2 2 0 0 1 2 2V18a2 2 0 0 1-2 2H2a2 2 0 0 1-2-2V2a2 2 0 0 1 2-2z" fill="#444746"/><circle cx="15.5" cy="9" r="2.4" fill="#c8cacc"/><path d="M11 16.5c0-2.6 2.2-3.9 4.5-3.9s4.5 1.3 4.5 3.9z" fill="#c8cacc"/></svg><div class="tx">0000 – Sol Blazers</div><svg class="kb" viewBox="0 0 2 10"><circle cx="1" cy="1" r="0.9" fill="#444746"/><circle cx="1" cy="5" r="0.9" fill="#444746"/><circle cx="1" cy="9" r="0.9" fill="#444746"/></svg></div>
<div class="tile" style="left:314.80px;top:133.00px"><svg class="fi" viewBox="0 0 24 20"><path d="M2 0h7l2.5 2.5H22a2 2 0 0 1 2 2V18a2 2 0 0 1-2 2H2a2 2 0 0 1-2-2V2a2 2 0 0 1 2-2z" fill="#444746"/><circle cx="15.5" cy="9" r="2.4" fill="#c8cacc"/><path d="M11 16.5c0-2.6 2.2-3.9 4.5-3.9s4.5 1.3 4.5 3.9z" fill="#c8cacc"/></svg><div class="tx">0000 – South Coun...</div><svg class="kb" viewBox="0 0 2 10"><circle cx="1" cy="1" r="0.9" fill="#444746"/><circle cx="1" cy="5" r="0.9" fill="#444746"/><circle cx="1" cy="9" r="0.9" fill="#444746"/></svg></div>
<div class="tile" style="left:418.70px;top:133.00px"><svg class="fi" viewBox="0 0 24 20"><path d="M2 0h7l2.5 2.5H22a2 2 0 0 1 2 2V18a2 2 0 0 1-2 2H2a2 2 0 0 1-2-2V2a2 2 0 0 1 2-2z" fill="#444746"/><circle cx="15.5" cy="9" r="2.4" fill="#c8cacc"/><path d="M11 16.5c0-2.6 2.2-3.9 4.5-3.9s4.5 1.3 4.5 3.9z" fill="#c8cacc"/></svg><div class="tx">0000 – Sporting De...</div><svg class="kb" viewBox="0 0 2 10"><circle cx="1" cy="1" r="0.9" fill="#444746"/><circle cx="1" cy="5" r="0.9" fill="#444746"/><circle cx="1" cy="9" r="0.9" fill="#444746"/></svg></div>
<div class="tile" style="left:522.60px;top:133.00px"><svg class="fi" viewBox="0 0 24 20"><path d="M2 0h7l2.5 2.5H22a2 2 0 0 1 2 2V18a2 2 0 0 1-2 2H2a2 2 0 0 1-2-2V2a2 2 0 0 1 2-2z" fill="#444746"/><circle cx="15.5" cy="9" r="2.4" fill="#c8cacc"/><path d="M11 16.5c0-2.6 2.2-3.9 4.5-3.9s4.5 1.3 4.5 3.9z" fill="#c8cacc"/></svg><div class="tx">0000 – St. Joseph A...</div><svg class="kb" viewBox="0 0 2 10"><circle cx="1" cy="1" r="0.9" fill="#444746"/><circle cx="1" cy="5" r="0.9" fill="#444746"/><circle cx="1" cy="9" r="0.9" fill="#444746"/></svg></div>
<div class="tile" style="left:107.00px;top:158.20px"><svg class="fi" viewBox="0 0 24 20"><path d="M2 0h7l2.5 2.5H22a2 2 0 0 1 2 2V18a2 2 0 0 1-2 2H2a2 2 0 0 1-2-2V2a2 2 0 0 1 2-2z" fill="#444746"/><circle cx="15.5" cy="9" r="2.4" fill="#c8cacc"/><path d="M11 16.5c0-2.6 2.2-3.9 4.5-3.9s4.5 1.3 4.5 3.9z" fill="#c8cacc"/></svg><div class="tx">0000 – Stags Lacro...</div><svg class="kb" viewBox="0 0 2 10"><circle cx="1" cy="1" r="0.9" fill="#444746"/><circle cx="1" cy="5" r="0.9" fill="#444746"/><circle cx="1" cy="9" r="0.9" fill="#444746"/></svg></div>
<div class="tile" style="left:210.90px;top:158.20px"><svg class="fi" viewBox="0 0 24 20"><path d="M2 0h7l2.5 2.5H22a2 2 0 0 1 2 2V18a2 2 0 0 1-2 2H2a2 2 0 0 1-2-2V2a2 2 0 0 1 2-2z" fill="#444746"/><circle cx="15.5" cy="9" r="2.4" fill="#c8cacc"/><path d="M11 16.5c0-2.6 2.2-3.9 4.5-3.9s4.5 1.3 4.5 3.9z" fill="#c8cacc"/></svg><div class="tx">0000 – Sudbury Gir...</div><svg class="kb" viewBox="0 0 2 10"><circle cx="1" cy="1" r="0.9" fill="#444746"/><circle cx="1" cy="5" r="0.9" fill="#444746"/><circle cx="1" cy="9" r="0.9" fill="#444746"/></svg></div>
<div class="tile" style="left:314.80px;top:158.20px"><svg class="fi" viewBox="0 0 24 20"><path d="M2 0h7l2.5 2.5H22a2 2 0 0 1 2 2V18a2 2 0 0 1-2 2H2a2 2 0 0 1-2-2V2a2 2 0 0 1 2-2z" fill="#444746"/><circle cx="15.5" cy="9" r="2.4" fill="#c8cacc"/><path d="M11 16.5c0-2.6 2.2-3.9 4.5-3.9s4.5 1.3 4.5 3.9z" fill="#c8cacc"/></svg><div class="tx">0004 – South Tamp...</div><svg class="kb" viewBox="0 0 2 10"><circle cx="1" cy="1" r="0.9" fill="#444746"/><circle cx="1" cy="5" r="0.9" fill="#444746"/><circle cx="1" cy="9" r="0.9" fill="#444746"/></svg></div>
<div class="tile" style="left:418.70px;top:158.20px"><svg class="fi" viewBox="0 0 24 20"><path d="M2 0h7l2.5 2.5H22a2 2 0 0 1 2 2V18a2 2 0 0 1-2 2H2a2 2 0 0 1-2-2V2a2 2 0 0 1 2-2z" fill="#444746"/><circle cx="15.5" cy="9" r="2.4" fill="#c8cacc"/><path d="M11 16.5c0-2.6 2.2-3.9 4.5-3.9s4.5 1.3 4.5 3.9z" fill="#c8cacc"/></svg><div class="tx">0016 – SNYL Swamp...</div><svg class="kb" viewBox="0 0 2 10"><circle cx="1" cy="1" r="0.9" fill="#444746"/><circle cx="1" cy="5" r="0.9" fill="#444746"/><circle cx="1" cy="9" r="0.9" fill="#444746"/></svg></div>
<div class="tile" style="left:522.60px;top:158.20px"><svg class="fi" viewBox="0 0 24 20"><path d="M2 0h7l2.5 2.5H22a2 2 0 0 1 2 2V18a2 2 0 0 1-2 2H2a2 2 0 0 1-2-2V2a2 2 0 0 1 2-2z" fill="#444746"/><circle cx="15.5" cy="9" r="2.4" fill="#c8cacc"/><path d="M11 16.5c0-2.6 2.2-3.9 4.5-3.9s4.5 1.3 4.5 3.9z" fill="#c8cacc"/></svg><div class="tx">0032 – Space Coast...</div><svg class="kb" viewBox="0 0 2 10"><circle cx="1" cy="1" r="0.9" fill="#444746"/><circle cx="1" cy="5" r="0.9" fill="#444746"/><circle cx="1" cy="9" r="0.9" fill="#444746"/></svg></div>
<div class="tile" style="left:107.00px;top:183.40px"><svg class="fi" viewBox="0 0 24 20"><path d="M2 0h7l2.5 2.5H22a2 2 0 0 1 2 2V18a2 2 0 0 1-2 2H2a2 2 0 0 1-2-2V2a2 2 0 0 1 2-2z" fill="#444746"/><circle cx="15.5" cy="9" r="2.4" fill="#c8cacc"/><path d="M11 16.5c0-2.6 2.2-3.9 4.5-3.9s4.5 1.3 4.5 3.9z" fill="#c8cacc"/></svg><div class="tx">0034 – Seahawks L...</div><svg class="kb" viewBox="0 0 2 10"><circle cx="1" cy="1" r="0.9" fill="#444746"/><circle cx="1" cy="5" r="0.9" fill="#444746"/><circle cx="1" cy="9" r="0.9" fill="#444746"/></svg></div>
<div class="tile" style="left:210.90px;top:183.40px"><svg class="fi" viewBox="0 0 24 20"><path d="M2 0h7l2.5 2.5H22a2 2 0 0 1 2 2V18a2 2 0 0 1-2 2H2a2 2 0 0 1-2-2V2a2 2 0 0 1 2-2z" fill="#444746"/><circle cx="15.5" cy="9" r="2.4" fill="#c8cacc"/><path d="M11 16.5c0-2.6 2.2-3.9 4.5-3.9s4.5 1.3 4.5 3.9z" fill="#c8cacc"/></svg><div class="tx">0053 – Stallions Lac...</div><svg class="kb" viewBox="0 0 2 10"><circle cx="1" cy="1" r="0.9" fill="#444746"/><circle cx="1" cy="5" r="0.9" fill="#444746"/><circle cx="1" cy="9" r="0.9" fill="#444746"/></svg></div>
<div class="tile" style="left:314.80px;top:183.40px"><svg class="fi" viewBox="0 0 24 20"><path d="M2 0h7l2.5 2.5H22a2 2 0 0 1 2 2V18a2 2 0 0 1-2 2H2a2 2 0 0 1-2-2V2a2 2 0 0 1 2-2z" fill="#444746"/><circle cx="15.5" cy="9" r="2.4" fill="#c8cacc"/><path d="M11 16.5c0-2.6 2.2-3.9 4.5-3.9s4.5 1.3 4.5 3.9z" fill="#c8cacc"/></svg><div class="tx">0054 – Swarm Lacr...</div><svg class="kb" viewBox="0 0 2 10"><circle cx="1" cy="1" r="0.9" fill="#444746"/><circle cx="1" cy="5" r="0.9" fill="#444746"/><circle cx="1" cy="9" r="0.9" fill="#444746"/></svg></div>
<div class="tile" style="left:418.70px;top:183.40px"><svg class="fi" viewBox="0 0 24 20"><path d="M2 0h7l2.5 2.5H22a2 2 0 0 1 2 2V18a2 2 0 0 1-2 2H2a2 2 0 0 1-2-2V2a2 2 0 0 1 2-2z" fill="#444746"/><circle cx="15.5" cy="9" r="2.4" fill="#c8cacc"/><path d="M11 16.5c0-2.6 2.2-3.9 4.5-3.9s4.5 1.3 4.5 3.9z" fill="#c8cacc"/></svg><div class="tx">0086 – Stuart Lacro...</div><svg class="kb" viewBox="0 0 2 10"><circle cx="1" cy="1" r="0.9" fill="#444746"/><circle cx="1" cy="5" r="0.9" fill="#444746"/><circle cx="1" cy="9" r="0.9" fill="#444746"/></svg></div>
<div class="tile" style="left:522.60px;top:183.40px"><svg class="fi" viewBox="0 0 24 20"><path d="M2 0h7l2.5 2.5H22a2 2 0 0 1 2 2V18a2 2 0 0 1-2 2H2a2 2 0 0 1-2-2V2a2 2 0 0 1 2-2z" fill="#444746"/><circle cx="15.5" cy="9" r="2.4" fill="#c8cacc"/><path d="M11 16.5c0-2.6 2.2-3.9 4.5-3.9s4.5 1.3 4.5 3.9z" fill="#c8cacc"/></svg><div class="tx">0114 – SkyFire Lacro...</div><svg class="kb" viewBox="0 0 2 10"><circle cx="1" cy="1" r="0.9" fill="#444746"/><circle cx="1" cy="5" r="0.9" fill="#444746"/><circle cx="1" cy="9" r="0.9" fill="#444746"/></svg></div>
<div class="tile" style="left:107.00px;top:208.60px"><svg class="fi" viewBox="0 0 24 20"><path d="M2 0h7l2.5 2.5H22a2 2 0 0 1 2 2V18a2 2 0 0 1-2 2H2a2 2 0 0 1-2-2V2a2 2 0 0 1 2-2z" fill="#444746"/><circle cx="15.5" cy="9" r="2.4" fill="#c8cacc"/><path d="M11 16.5c0-2.6 2.2-3.9 4.5-3.9s4.5 1.3 4.5 3.9z" fill="#c8cacc"/></svg><div class="tx">0121 – St. Petersbur...</div><svg class="kb" viewBox="0 0 2 10"><circle cx="1" cy="1" r="0.9" fill="#444746"/><circle cx="1" cy="5" r="0.9" fill="#444746"/><circle cx="1" cy="9" r="0.9" fill="#444746"/></svg></div>
<div class="tile" style="left:210.90px;top:208.60px"><svg class="fi" viewBox="0 0 24 20"><path d="M2 0h7l2.5 2.5H22a2 2 0 0 1 2 2V18a2 2 0 0 1-2 2H2a2 2 0 0 1-2-2V2a2 2 0 0 1 2-2z" fill="#444746"/><circle cx="15.5" cy="9" r="2.4" fill="#c8cacc"/><path d="M11 16.5c0-2.6 2.2-3.9 4.5-3.9s4.5 1.3 4.5 3.9z" fill="#c8cacc"/></svg><div class="tx">0125 – Storm Lacros...</div><svg class="kb" viewBox="0 0 2 10"><circle cx="1" cy="1" r="0.9" fill="#444746"/><circle cx="1" cy="5" r="0.9" fill="#444746"/><circle cx="1" cy="9" r="0.9" fill="#444746"/></svg></div>
<div class="tile" style="left:314.80px;top:208.60px"><svg class="fi" viewBox="0 0 24 20"><path d="M2 0h7l2.5 2.5H22a2 2 0 0 1 2 2V18a2 2 0 0 1-2 2H2a2 2 0 0 1-2-2V2a2 2 0 0 1 2-2z" fill="#444746"/><circle cx="15.5" cy="9" r="2.4" fill="#c8cacc"/><path d="M11 16.5c0-2.6 2.2-3.9 4.5-3.9s4.5 1.3 4.5 3.9z" fill="#c8cacc"/></svg><div class="tx">0133 – SoCal Devils ...</div><svg class="kb" viewBox="0 0 2 10"><circle cx="1" cy="1" r="0.9" fill="#444746"/><circle cx="1" cy="5" r="0.9" fill="#444746"/><circle cx="1" cy="9" r="0.9" fill="#444746"/></svg></div>
<div class="tile" style="left:418.70px;top:208.60px"><svg class="fi" viewBox="0 0 24 20"><path d="M2 0h7l2.5 2.5H22a2 2 0 0 1 2 2V18a2 2 0 0 1-2 2H2a2 2 0 0 1-2-2V2a2 2 0 0 1 2-2z" fill="#444746"/><circle cx="15.5" cy="9" r="2.4" fill="#c8cacc"/><path d="M11 16.5c0-2.6 2.2-3.9 4.5-3.9s4.5 1.3 4.5 3.9z" fill="#c8cacc"/></svg><div class="tx">0142 – Sun Prairie Y...</div><svg class="kb" viewBox="0 0 2 10"><circle cx="1" cy="1" r="0.9" fill="#444746"/><circle cx="1" cy="5" r="0.9" fill="#444746"/><circle cx="1" cy="9" r="0.9" fill="#444746"/></svg></div>
<div class="tile" style="left:522.60px;top:208.60px"><svg class="fi" viewBox="0 0 24 20"><path d="M2 0h7l2.5 2.5H22a2 2 0 0 1 2 2V18a2 2 0 0 1-2 2H2a2 2 0 0 1-2-2V2a2 2 0 0 1 2-2z" fill="#444746"/><circle cx="15.5" cy="9" r="2.4" fill="#c8cacc"/><path d="M11 16.5c0-2.6 2.2-3.9 4.5-3.9s4.5 1.3 4.5 3.9z" fill="#c8cacc"/></svg><div class="tx">0148 – Signature Sp...</div><svg class="kb" viewBox="0 0 2 10"><circle cx="1" cy="1" r="0.9" fill="#444746"/><circle cx="1" cy="5" r="0.9" fill="#444746"/><circle cx="1" cy="9" r="0.9" fill="#444746"/></svg></div>
<div class="tile" style="left:107.00px;top:233.80px"><svg class="fi" viewBox="0 0 24 20"><path d="M2 0h7l2.5 2.5H22a2 2 0 0 1 2 2V18a2 2 0 0 1-2 2H2a2 2 0 0 1-2-2V2a2 2 0 0 1 2-2z" fill="#444746"/><circle cx="15.5" cy="9" r="2.4" fill="#c8cacc"/><path d="M11 16.5c0-2.6 2.2-3.9 4.5-3.9s4.5 1.3 4.5 3.9z" fill="#c8cacc"/></svg><div class="tx">0156 – Saugus Yout...</div><svg class="kb" viewBox="0 0 2 10"><circle cx="1" cy="1" r="0.9" fill="#444746"/><circle cx="1" cy="5" r="0.9" fill="#444746"/><circle cx="1" cy="9" r="0.9" fill="#444746"/></svg></div>
<div class="tile" style="left:210.90px;top:233.80px"><svg class="fi" viewBox="0 0 24 20"><path d="M2 0h7l2.5 2.5H22a2 2 0 0 1 2 2V18a2 2 0 0 1-2 2H2a2 2 0 0 1-2-2V2a2 2 0 0 1 2-2z" fill="#444746"/><circle cx="15.5" cy="9" r="2.4" fill="#c8cacc"/><path d="M11 16.5c0-2.6 2.2-3.9 4.5-3.9s4.5 1.3 4.5 3.9z" fill="#c8cacc"/></svg><div class="tx">0166 – S.A.R. Hound...</div><svg class="kb" viewBox="0 0 2 10"><circle cx="1" cy="1" r="0.9" fill="#444746"/><circle cx="1" cy="5" r="0.9" fill="#444746"/><circle cx="1" cy="9" r="0.9" fill="#444746"/></svg></div>
<div class="tile" style="left:314.80px;top:233.80px"><svg class="fi" viewBox="0 0 24 20"><path d="M2 0h7l2.5 2.5H22a2 2 0 0 1 2 2V18a2 2 0 0 1-2 2H2a2 2 0 0 1-2-2V2a2 2 0 0 1 2-2z" fill="#444746"/><circle cx="15.5" cy="9" r="2.4" fill="#c8cacc"/><path d="M11 16.5c0-2.6 2.2-3.9 4.5-3.9s4.5 1.3 4.5 3.9z" fill="#c8cacc"/></svg><div class="tx">0169 – Storm Sports</div><svg class="kb" viewBox="0 0 2 10"><circle cx="1" cy="1" r="0.9" fill="#444746"/><circle cx="1" cy="5" r="0.9" fill="#444746"/><circle cx="1" cy="9" r="0.9" fill="#444746"/></svg></div>
<div class="tile" style="left:418.70px;top:233.80px"><svg class="fi" viewBox="0 0 24 20"><path d="M2 0h7l2.5 2.5H22a2 2 0 0 1 2 2V18a2 2 0 0 1-2 2H2a2 2 0 0 1-2-2V2a2 2 0 0 1 2-2z" fill="#444746"/><circle cx="15.5" cy="9" r="2.4" fill="#c8cacc"/><path d="M11 16.5c0-2.6 2.2-3.9 4.5-3.9s4.5 1.3 4.5 3.9z" fill="#c8cacc"/></svg><div class="tx">0182 – San Clement...</div><svg class="kb" viewBox="0 0 2 10"><circle cx="1" cy="1" r="0.9" fill="#444746"/><circle cx="1" cy="5" r="0.9" fill="#444746"/><circle cx="1" cy="9" r="0.9" fill="#444746"/></svg></div>
<div class="tile" style="left:522.60px;top:233.80px"><svg class="fi" viewBox="0 0 24 20"><path d="M2 0h7l2.5 2.5H22a2 2 0 0 1 2 2V18a2 2 0 0 1-2 2H2a2 2 0 0 1-2-2V2a2 2 0 0 1 2-2z" fill="#444746"/><circle cx="15.5" cy="9" r="2.4" fill="#c8cacc"/><path d="M11 16.5c0-2.6 2.2-3.9 4.5-3.9s4.5 1.3 4.5 3.9z" fill="#c8cacc"/></svg><div class="tx">0184 – Space Cowb...</div><svg class="kb" viewBox="0 0 2 10"><circle cx="1" cy="1" r="0.9" fill="#444746"/><circle cx="1" cy="5" r="0.9" fill="#444746"/><circle cx="1" cy="9" r="0.9" fill="#444746"/></svg></div>
<div class="tile" style="left:107.00px;top:259.00px"><svg class="fi" viewBox="0 0 24 20"><path d="M2 0h7l2.5 2.5H22a2 2 0 0 1 2 2V18a2 2 0 0 1-2 2H2a2 2 0 0 1-2-2V2a2 2 0 0 1 2-2z" fill="#444746"/><circle cx="15.5" cy="9" r="2.4" fill="#c8cacc"/><path d="M11 16.5c0-2.6 2.2-3.9 4.5-3.9s4.5 1.3 4.5 3.9z" fill="#c8cacc"/></svg><div class="tx">0191 – South Hotsho...</div><svg class="kb" viewBox="0 0 2 10"><circle cx="1" cy="1" r="0.9" fill="#444746"/><circle cx="1" cy="5" r="0.9" fill="#444746"/><circle cx="1" cy="9" r="0.9" fill="#444746"/></svg></div>
<div class="tile" style="left:210.90px;top:259.00px"><svg class="fi" viewBox="0 0 24 20"><path d="M2 0h7l2.5 2.5H22a2 2 0 0 1 2 2V18a2 2 0 0 1-2 2H2a2 2 0 0 1-2-2V2a2 2 0 0 1 2-2z" fill="#444746"/><circle cx="15.5" cy="9" r="2.4" fill="#c8cacc"/><path d="M11 16.5c0-2.6 2.2-3.9 4.5-3.9s4.5 1.3 4.5 3.9z" fill="#c8cacc"/></svg><div class="tx">0209 – Spartan Chir...</div><svg class="kb" viewBox="0 0 2 10"><circle cx="1" cy="1" r="0.9" fill="#444746"/><circle cx="1" cy="5" r="0.9" fill="#444746"/><circle cx="1" cy="9" r="0.9" fill="#444746"/></svg></div>
<div class="tile" style="left:314.80px;top:259.00px"><svg class="fi" viewBox="0 0 24 20"><path d="M2 0h7l2.5 2.5H22a2 2 0 0 1 2 2V18a2 2 0 0 1-2 2H2a2 2 0 0 1-2-2V2a2 2 0 0 1 2-2z" fill="#444746"/><circle cx="15.5" cy="9" r="2.4" fill="#c8cacc"/><path d="M11 16.5c0-2.6 2.2-3.9 4.5-3.9s4.5 1.3 4.5 3.9z" fill="#c8cacc"/></svg><div class="tx">0224 – Stingers Lac...</div><svg class="kb" viewBox="0 0 2 10"><circle cx="1" cy="1" r="0.9" fill="#444746"/><circle cx="1" cy="5" r="0.9" fill="#444746"/><circle cx="1" cy="9" r="0.9" fill="#444746"/></svg></div>
<div class="tile" style="left:418.70px;top:259.00px"><svg class="fi" viewBox="0 0 24 20"><path d="M2 0h7l2.5 2.5H22a2 2 0 0 1 2 2V18a2 2 0 0 1-2 2H2a2 2 0 0 1-2-2V2a2 2 0 0 1 2-2z" fill="#444746"/><circle cx="15.5" cy="9" r="2.4" fill="#c8cacc"/><path d="M11 16.5c0-2.6 2.2-3.9 4.5-3.9s4.5 1.3 4.5 3.9z" fill="#c8cacc"/></svg><div class="tx">0240 – Sweden Lac...</div><svg class="kb" viewBox="0 0 2 10"><circle cx="1" cy="1" r="0.9" fill="#444746"/><circle cx="1" cy="5" r="0.9" fill="#444746"/><circle cx="1" cy="9" r="0.9" fill="#444746"/></svg></div>
<div class="tile" style="left:522.60px;top:259.00px"><svg class="fi" viewBox="0 0 24 20"><path d="M2 0h7l2.5 2.5H22a2 2 0 0 1 2 2V18a2 2 0 0 1-2 2H2a2 2 0 0 1-2-2V2a2 2 0 0 1 2-2z" fill="#444746"/><circle cx="15.5" cy="9" r="2.4" fill="#c8cacc"/><path d="M11 16.5c0-2.6 2.2-3.9 4.5-3.9s4.5 1.3 4.5 3.9z" fill="#c8cacc"/></svg><div class="tx">0254 – Space Coast...</div><svg class="kb" viewBox="0 0 2 10"><circle cx="1" cy="1" r="0.9" fill="#444746"/><circle cx="1" cy="5" r="0.9" fill="#444746"/><circle cx="1" cy="9" r="0.9" fill="#444746"/></svg></div>
<div class="tile" style="left:107.00px;top:284.20px"><svg class="fi" viewBox="0 0 24 20"><path d="M2 0h7l2.5 2.5H22a2 2 0 0 1 2 2V18a2 2 0 0 1-2 2H2a2 2 0 0 1-2-2V2a2 2 0 0 1 2-2z" fill="#444746"/><circle cx="15.5" cy="9" r="2.4" fill="#c8cacc"/><path d="M11 16.5c0-2.6 2.2-3.9 4.5-3.9s4.5 1.3 4.5 3.9z" fill="#c8cacc"/></svg><div class="tx">0272 – Southern Ma...</div><svg class="kb" viewBox="0 0 2 10"><circle cx="1" cy="1" r="0.9" fill="#444746"/><circle cx="1" cy="5" r="0.9" fill="#444746"/><circle cx="1" cy="9" r="0.9" fill="#444746"/></svg></div>
<div class="tile" style="left:210.90px;top:284.20px"><svg class="fi" viewBox="0 0 24 20"><path d="M2 0h7l2.5 2.5H22a2 2 0 0 1 2 2V18a2 2 0 0 1-2 2H2a2 2 0 0 1-2-2V2a2 2 0 0 1 2-2z" fill="#444746"/><circle cx="15.5" cy="9" r="2.4" fill="#c8cacc"/><path d="M11 16.5c0-2.6 2.2-3.9 4.5-3.9s4.5 1.3 4.5 3.9z" fill="#c8cacc"/></svg><div class="tx">0279 – South Lake T...</div><svg class="kb" viewBox="0 0 2 10"><circle cx="1" cy="1" r="0.9" fill="#444746"/><circle cx="1" cy="5" r="0.9" fill="#444746"/><circle cx="1" cy="9" r="0.9" fill="#444746"/></svg></div>
<div class="tile" style="left:314.80px;top:284.20px"><svg class="fi" viewBox="0 0 24 20"><path d="M2 0h7l2.5 2.5H22a2 2 0 0 1 2 2V18a2 2 0 0 1-2 2H2a2 2 0 0 1-2-2V2a2 2 0 0 1 2-2z" fill="#444746"/><circle cx="15.5" cy="9" r="2.4" fill="#c8cacc"/><path d="M11 16.5c0-2.6 2.2-3.9 4.5-3.9s4.5 1.3 4.5 3.9z" fill="#c8cacc"/></svg><div class="tx">0281 – SocRoc NYC</div><svg class="kb" viewBox="0 0 2 10"><circle cx="1" cy="1" r="0.9" fill="#444746"/><circle cx="1" cy="5" r="0.9" fill="#444746"/><circle cx="1" cy="9" r="0.9" fill="#444746"/></svg></div>
<div class="tile" style="left:418.70px;top:284.20px"><svg class="fi" viewBox="0 0 24 20"><path d="M2 0h7l2.5 2.5H22a2 2 0 0 1 2 2V18a2 2 0 0 1-2 2H2a2 2 0 0 1-2-2V2a2 2 0 0 1 2-2z" fill="#444746"/><circle cx="15.5" cy="9" r="2.4" fill="#c8cacc"/><path d="M11 16.5c0-2.6 2.2-3.9 4.5-3.9s4.5 1.3 4.5 3.9z" fill="#c8cacc"/></svg><div class="tx">0284 – St. Pete Cat...</div><svg class="kb" viewBox="0 0 2 10"><circle cx="1" cy="1" r="0.9" fill="#444746"/><circle cx="1" cy="5" r="0.9" fill="#444746"/><circle cx="1" cy="9" r="0.9" fill="#444746"/></svg></div>
<div class="tile" style="left:522.60px;top:284.20px"><svg class="fi" viewBox="0 0 24 20"><path d="M2 0h7l2.5 2.5H22a2 2 0 0 1 2 2V18a2 2 0 0 1-2 2H2a2 2 0 0 1-2-2V2a2 2 0 0 1 2-2z" fill="#444746"/><circle cx="15.5" cy="9" r="2.4" fill="#c8cacc"/><path d="M11 16.5c0-2.6 2.2-3.9 4.5-3.9s4.5 1.3 4.5 3.9z" fill="#c8cacc"/></svg><div class="tx">0285 – Southeast V...</div><svg class="kb" viewBox="0 0 2 10"><circle cx="1" cy="1" r="0.9" fill="#444746"/><circle cx="1" cy="5" r="0.9" fill="#444746"/><circle cx="1" cy="9" r="0.9" fill="#444746"/></svg></div>
<div class="tile" style="left:107.00px;top:309.40px"><svg class="fi" viewBox="0 0 24 20"><path d="M2 0h7l2.5 2.5H22a2 2 0 0 1 2 2V18a2 2 0 0 1-2 2H2a2 2 0 0 1-2-2V2a2 2 0 0 1 2-2z" fill="#444746"/><circle cx="15.5" cy="9" r="2.4" fill="#c8cacc"/><path d="M11 16.5c0-2.6 2.2-3.9 4.5-3.9s4.5 1.3 4.5 3.9z" fill="#c8cacc"/></svg><div class="tx">0288 – State Colleg...</div><svg class="kb" viewBox="0 0 2 10"><circle cx="1" cy="1" r="0.9" fill="#444746"/><circle cx="1" cy="5" r="0.9" fill="#444746"/><circle cx="1" cy="9" r="0.9" fill="#444746"/></svg></div>
<div class="tile" style="left:210.90px;top:309.40px"><svg class="fi" viewBox="0 0 24 20"><path d="M2 0h7l2.5 2.5H22a2 2 0 0 1 2 2V18a2 2 0 0 1-2 2H2a2 2 0 0 1-2-2V2a2 2 0 0 1 2-2z" fill="#444746"/><circle cx="15.5" cy="9" r="2.4" fill="#c8cacc"/><path d="M11 16.5c0-2.6 2.2-3.9 4.5-3.9s4.5 1.3 4.5 3.9z" fill="#c8cacc"/></svg><div class="tx">0309 – Shockwave ...</div><svg class="kb" viewBox="0 0 2 10"><circle cx="1" cy="1" r="0.9" fill="#444746"/><circle cx="1" cy="5" r="0.9" fill="#444746"/><circle cx="1" cy="9" r="0.9" fill="#444746"/></svg></div>
<div class="tile" style="left:314.80px;top:309.40px"><svg class="fi" viewBox="0 0 24 20"><path d="M2 0h7l2.5 2.5H22a2 2 0 0 1 2 2V18a2 2 0 0 1-2 2H2a2 2 0 0 1-2-2V2a2 2 0 0 1 2-2z" fill="#444746"/><circle cx="15.5" cy="9" r="2.4" fill="#c8cacc"/><path d="M11 16.5c0-2.6 2.2-3.9 4.5-3.9s4.5 1.3 4.5 3.9z" fill="#c8cacc"/></svg><div class="tx">0314 – Smyrna Lacr...</div><svg class="kb" viewBox="0 0 2 10"><circle cx="1" cy="1" r="0.9" fill="#444746"/><circle cx="1" cy="5" r="0.9" fill="#444746"/><circle cx="1" cy="9" r="0.9" fill="#444746"/></svg></div>
<div class="tile" style="left:418.70px;top:309.40px"><svg class="fi" viewBox="0 0 24 20"><path d="M2 0h7l2.5 2.5H22a2 2 0 0 1 2 2V18a2 2 0 0 1-2 2H2a2 2 0 0 1-2-2V2a2 2 0 0 1 2-2z" fill="#444746"/><circle cx="15.5" cy="9" r="2.4" fill="#c8cacc"/><path d="M11 16.5c0-2.6 2.2-3.9 4.5-3.9s4.5 1.3 4.5 3.9z" fill="#c8cacc"/></svg><div class="tx">0329 – South Florid...</div><svg class="kb" viewBox="0 0 2 10"><circle cx="1" cy="1" r="0.9" fill="#444746"/><circle cx="1" cy="5" r="0.9" fill="#444746"/><circle cx="1" cy="9" r="0.9" fill="#444746"/></svg></div>
<div class="tile" style="left:522.60px;top:309.40px"><svg class="fi" viewBox="0 0 24 20"><path d="M2 0h7l2.5 2.5H22a2 2 0 0 1 2 2V18a2 2 0 0 1-2 2H2a2 2 0 0 1-2-2V2a2 2 0 0 1 2-2z" fill="#444746"/><circle cx="15.5" cy="9" r="2.4" fill="#c8cacc"/><path d="M11 16.5c0-2.6 2.2-3.9 4.5-3.9s4.5 1.3 4.5 3.9z" fill="#c8cacc"/></svg><div class="tx">0334 – Stallions Box...</div><svg class="kb" viewBox="0 0 2 10"><circle cx="1" cy="1" r="0.9" fill="#444746"/><circle cx="1" cy="5" r="0.9" fill="#444746"/><circle cx="1" cy="9" r="0.9" fill="#444746"/></svg></div>
<div class="tile" style="left:107.00px;top:334.60px"><svg class="fi" viewBox="0 0 24 20"><path d="M2 0h7l2.5 2.5H22a2 2 0 0 1 2 2V18a2 2 0 0 1-2 2H2a2 2 0 0 1-2-2V2a2 2 0 0 1 2-2z" fill="#444746"/><circle cx="15.5" cy="9" r="2.4" fill="#c8cacc"/><path d="M11 16.5c0-2.6 2.2-3.9 4.5-3.9s4.5 1.3 4.5 3.9z" fill="#c8cacc"/></svg><div class="tx">0338 – Shoreline La...</div><svg class="kb" viewBox="0 0 2 10"><circle cx="1" cy="1" r="0.9" fill="#444746"/><circle cx="1" cy="5" r="0.9" fill="#444746"/><circle cx="1" cy="9" r="0.9" fill="#444746"/></svg></div>
<div class="tile" style="left:210.90px;top:334.60px"><svg class="fi" viewBox="0 0 24 20"><path d="M2 0h7l2.5 2.5H22a2 2 0 0 1 2 2V18a2 2 0 0 1-2 2H2a2 2 0 0 1-2-2V2a2 2 0 0 1 2-2z" fill="#444746"/><circle cx="15.5" cy="9" r="2.4" fill="#c8cacc"/><path d="M11 16.5c0-2.6 2.2-3.9 4.5-3.9s4.5 1.3 4.5 3.9z" fill="#c8cacc"/></svg><div class="tx">0342 – Skills After S...</div><svg class="kb" viewBox="0 0 2 10"><circle cx="1" cy="1" r="0.9" fill="#444746"/><circle cx="1" cy="5" r="0.9" fill="#444746"/><circle cx="1" cy="9" r="0.9" fill="#444746"/></svg></div>
<div class="tile" style="left:314.80px;top:334.60px"><svg class="fi" viewBox="0 0 24 20"><path d="M2 0h7l2.5 2.5H22a2 2 0 0 1 2 2V18a2 2 0 0 1-2 2H2a2 2 0 0 1-2-2V2a2 2 0 0 1 2-2z" fill="#444746"/><circle cx="15.5" cy="9" r="2.4" fill="#c8cacc"/><path d="M11 16.5c0-2.6 2.2-3.9 4.5-3.9s4.5 1.3 4.5 3.9z" fill="#c8cacc"/></svg><div class="tx">0391 – Sickles High ...</div><svg class="kb" viewBox="0 0 2 10"><circle cx="1" cy="1" r="0.9" fill="#444746"/><circle cx="1" cy="5" r="0.9" fill="#444746"/><circle cx="1" cy="9" r="0.9" fill="#444746"/></svg></div>
<div class="tile" style="left:418.70px;top:334.60px"><svg class="fi" viewBox="0 0 24 20"><path d="M2 0h7l2.5 2.5H22a2 2 0 0 1 2 2V18a2 2 0 0 1-2 2H2a2 2 0 0 1-2-2V2a2 2 0 0 1 2-2z" fill="#444746"/><circle cx="15.5" cy="9" r="2.4" fill="#c8cacc"/><path d="M11 16.5c0-2.6 2.2-3.9 4.5-3.9s4.5 1.3 4.5 3.9z" fill="#c8cacc"/></svg><div class="tx">0392 – Southern Elit...</div><svg class="kb" viewBox="0 0 2 10"><circle cx="1" cy="1" r="0.9" fill="#444746"/><circle cx="1" cy="5" r="0.9" fill="#444746"/><circle cx="1" cy="9" r="0.9" fill="#444746"/></svg></div>
<div class="tile" style="left:522.60px;top:334.60px"><svg class="fi" viewBox="0 0 24 20"><path d="M2 0h7l2.5 2.5H22a2 2 0 0 1 2 2V18a2 2 0 0 1-2 2H2a2 2 0 0 1-2-2V2a2 2 0 0 1 2-2z" fill="#444746"/><circle cx="15.5" cy="9" r="2.4" fill="#c8cacc"/><path d="M11 16.5c0-2.6 2.2-3.9 4.5-3.9s4.5 1.3 4.5 3.9z" fill="#c8cacc"/></svg><div class="tx">0407 – Stoughton Y...</div><svg class="kb" viewBox="0 0 2 10"><circle cx="1" cy="1" r="0.9" fill="#444746"/><circle cx="1" cy="5" r="0.9" fill="#444746"/><circle cx="1" cy="9" r="0.9" fill="#444746"/></svg></div>
<div class="tile" style="left:107.00px;top:359.80px"><svg class="fi" viewBox="0 0 24 20"><path d="M2 0h7l2.5 2.5H22a2 2 0 0 1 2 2V18a2 2 0 0 1-2 2H2a2 2 0 0 1-2-2V2a2 2 0 0 1 2-2z" fill="#444746"/><circle cx="15.5" cy="9" r="2.4" fill="#c8cacc"/><path d="M11 16.5c0-2.6 2.2-3.9 4.5-3.9s4.5 1.3 4.5 3.9z" fill="#c8cacc"/></svg><div class="tx">0414 – Stoughton:R...</div><svg class="kb" viewBox="0 0 2 10"><circle cx="1" cy="1" r="0.9" fill="#444746"/><circle cx="1" cy="5" r="0.9" fill="#444746"/><circle cx="1" cy="9" r="0.9" fill="#444746"/></svg></div>
<div class="tile" style="left:210.90px;top:359.80px"><svg class="fi" viewBox="0 0 24 20"><path d="M2 0h7l2.5 2.5H22a2 2 0 0 1 2 2V18a2 2 0 0 1-2 2H2a2 2 0 0 1-2-2V2a2 2 0 0 1 2-2z" fill="#444746"/><circle cx="15.5" cy="9" r="2.4" fill="#c8cacc"/><path d="M11 16.5c0-2.6 2.2-3.9 4.5-3.9s4.5 1.3 4.5 3.9z" fill="#c8cacc"/></svg><div class="tx">0428 – Southern Ed...</div><svg class="kb" viewBox="0 0 2 10"><circle cx="1" cy="1" r="0.9" fill="#444746"/><circle cx="1" cy="5" r="0.9" fill="#444746"/><circle cx="1" cy="9" r="0.9" fill="#444746"/></svg></div>
<div class="tile" style="left:314.80px;top:359.80px"><svg class="fi" viewBox="0 0 24 20"><path d="M2 0h7l2.5 2.5H22a2 2 0 0 1 2 2V18a2 2 0 0 1-2 2H2a2 2 0 0 1-2-2V2a2 2 0 0 1 2-2z" fill="#444746"/><circle cx="15.5" cy="9" r="2.4" fill="#c8cacc"/><path d="M11 16.5c0-2.6 2.2-3.9 4.5-3.9s4.5 1.3 4.5 3.9z" fill="#c8cacc"/></svg><div class="tx">0441 – StatLAX Lacr...</div><svg class="kb" viewBox="0 0 2 10"><circle cx="1" cy="1" r="0.9" fill="#444746"/><circle cx="1" cy="5" r="0.9" fill="#444746"/><circle cx="1" cy="9" r="0.9" fill="#444746"/></svg></div>
<div class="tile sel" style="left:418.70px;top:359.80px"><svg class="fi" viewBox="0 0 24 20"><path d="M2 0h7l2.5 2.5H22a2 2 0 0 1 2 2V18a2 2 0 0 1-2 2H2a2 2 0 0 1-2-2V2a2 2 0 0 1 2-2z" fill="#444746"/><circle cx="15.5" cy="9" r="2.4" fill="#c8cacc"/><path d="M11 16.5c0-2.6 2.2-3.9 4.5-3.9s4.5 1.3 4.5 3.9z" fill="#c8cacc"/></svg><div class="tx">0442 – Stags Lacro...</div><svg class="kb" viewBox="0 0 2 10"><circle cx="1" cy="1" r="0.9" fill="#444746"/><circle cx="1" cy="5" r="0.9" fill="#444746"/><circle cx="1" cy="9" r="0.9" fill="#444746"/></svg></div>
<div class="tile" style="left:522.60px;top:359.80px"><svg class="fi" viewBox="0 0 24 20"><path d="M2 0h7l2.5 2.5H22a2 2 0 0 1 2 2V18a2 2 0 0 1-2 2H2a2 2 0 0 1-2-2V2a2 2 0 0 1 2-2z" fill="#444746"/><circle cx="15.5" cy="9" r="2.4" fill="#c8cacc"/><path d="M11 16.5c0-2.6 2.2-3.9 4.5-3.9s4.5 1.3 4.5 3.9z" fill="#c8cacc"/></svg><div class="tx">0443 – St. Margaret&#x27;...</div><svg class="kb" viewBox="0 0 2 10"><circle cx="1" cy="1" r="0.9" fill="#444746"/><circle cx="1" cy="5" r="0.9" fill="#444746"/><circle cx="1" cy="9" r="0.9" fill="#444746"/></svg></div>
<div class="tile" style="left:107.00px;top:385.00px"><svg class="fi" viewBox="0 0 24 20"><path d="M2 0h7l2.5 2.5H22a2 2 0 0 1 2 2V18a2 2 0 0 1-2 2H2a2 2 0 0 1-2-2V2a2 2 0 0 1 2-2z" fill="#444746"/><circle cx="15.5" cy="9" r="2.4" fill="#c8cacc"/><path d="M11 16.5c0-2.6 2.2-3.9 4.5-3.9s4.5 1.3 4.5 3.9z" fill="#c8cacc"/></svg><div class="tx">0489 – Charlotte Stag</div><svg class="kb" viewBox="0 0 2 10"><circle cx="1" cy="1" r="0.9" fill="#444746"/><circle cx="1" cy="5" r="0.9" fill="#444746"/><circle cx="1" cy="9" r="0.9" fill="#444746"/></svg></div>
<div class="tile" style="left:210.90px;top:385.00px"><svg class="fi" viewBox="0 0 24 20"><path d="M2 0h7l2.5 2.5H22a2 2 0 0 1 2 2V18a2 2 0 0 1-2 2H2a2 2 0 0 1-2-2V2a2 2 0 0 1 2-2z" fill="#444746"/><circle cx="15.5" cy="9" r="2.4" fill="#c8cacc"/><path d="M11 16.5c0-2.6 2.2-3.9 4.5-3.9s4.5 1.3 4.5 3.9z" fill="#c8cacc"/></svg><div class="tx">0518 – 757 Select La...</div><svg class="kb" viewBox="0 0 2 10"><circle cx="1" cy="1" r="0.9" fill="#444746"/><circle cx="1" cy="5" r="0.9" fill="#444746"/><circle cx="1" cy="9" r="0.9" fill="#444746"/></svg></div>
<div class="tile" style="left:314.80px;top:385.00px"><svg class="fi" viewBox="0 0 24 20"><path d="M2 0h7l2.5 2.5H22a2 2 0 0 1 2 2V18a2 2 0 0 1-2 2H2a2 2 0 0 1-2-2V2a2 2 0 0 1 2-2z" fill="#444746"/><circle cx="15.5" cy="9" r="2.4" fill="#c8cacc"/><path d="M11 16.5c0-2.6 2.2-3.9 4.5-3.9s4.5 1.3 4.5 3.9z" fill="#c8cacc"/></svg><div class="tx">0522 – Stallions Lac...</div><svg class="kb" viewBox="0 0 2 10"><circle cx="1" cy="1" r="0.9" fill="#444746"/><circle cx="1" cy="5" r="0.9" fill="#444746"/><circle cx="1" cy="9" r="0.9" fill="#444746"/></svg></div>
</div>
</body></html>
